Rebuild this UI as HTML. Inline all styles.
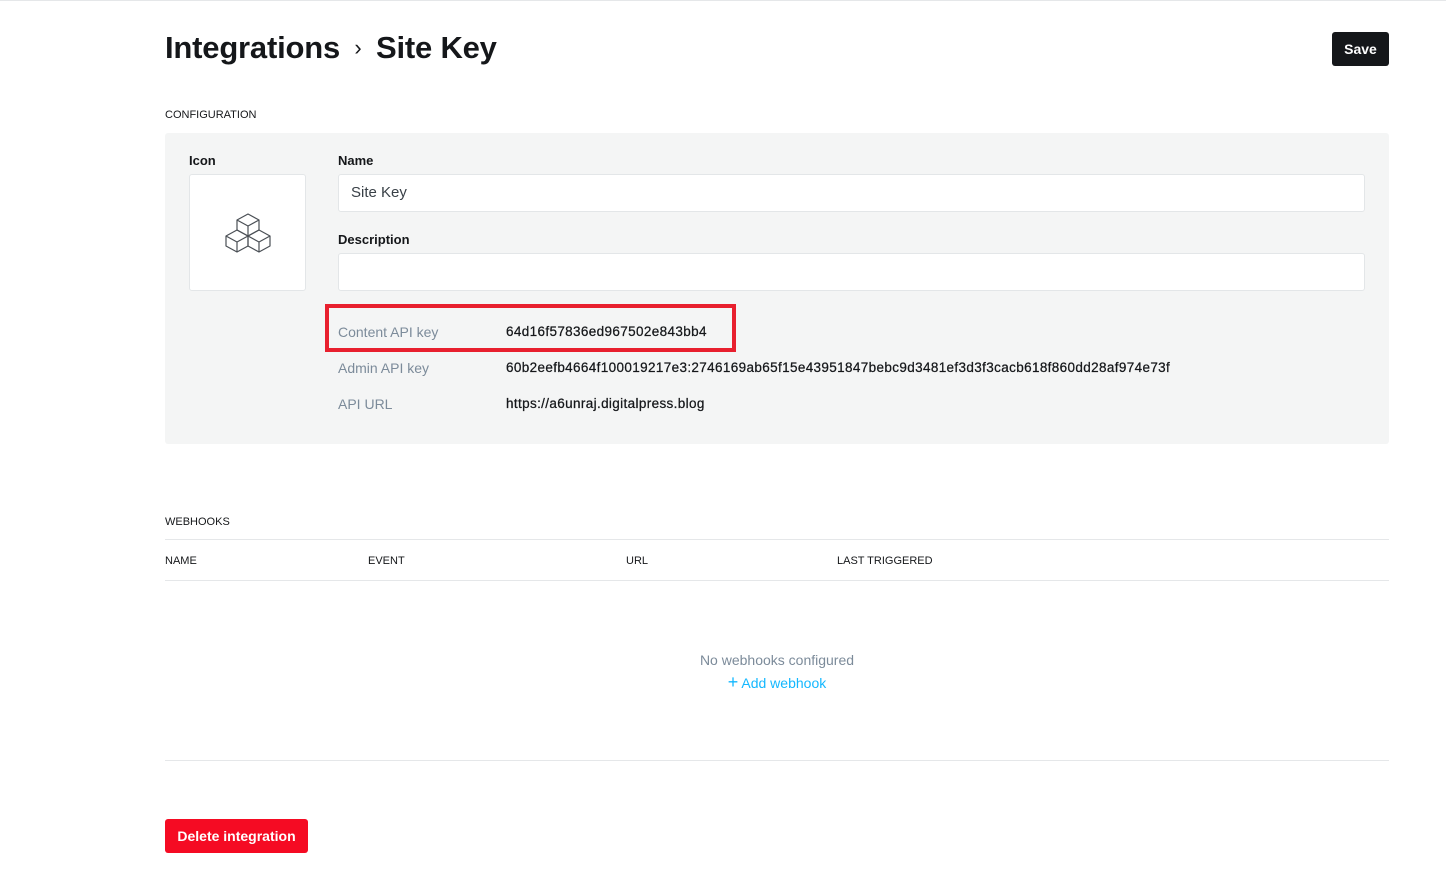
<!DOCTYPE html>
<html><head><meta charset="utf-8"><style>
*{box-sizing:border-box;margin:0;padding:0}
body{width:1446px;height:881px;background:#fff;font-family:"Liberation Sans",sans-serif;color:#15171a;position:relative;overflow:hidden}
.topline{position:absolute;left:0;top:0;width:1446px;height:1px;background:#e5e7e9}
.w{position:absolute;left:0;top:1px;width:1446px;height:880px}
.a{position:absolute;white-space:nowrap}
h1{position:absolute;left:165px;top:29px;font-size:31px;font-weight:700;letter-spacing:-0.2px}
.save{left:1332px;top:31px;width:57px;height:34px;background:#15171a;color:#fff;font-size:14px;font-weight:700;border-radius:3px;display:flex;align-items:center;justify-content:center}
.lab{font-size:11px;color:#15171a}
.panel{left:165px;top:132px;width:1224px;height:311px;background:#f4f5f5;border-radius:3px}
.fl{font-size:13px;font-weight:700;color:#15171a}
.box{background:#fff;border:1px solid #e3e6e8;border-radius:3px}
.k{font-size:14px;color:#7c8b9a}
.v{font-size:13.5px;color:#15171a;letter-spacing:0.36px;-webkit-text-stroke:0.25px #15171a}
.hr{left:165px;width:1224px;height:1px;background:#e5e7e9}
.th{font-size:11px;top:554px}
</style></head><body>
<div class="topline"></div>
<div class="w">
<h1>Integrations <span style="font-weight:400;font-size:22px;position:relative;top:-3px;margin:0 6px">›</span> Site Key</h1>
<div class="a save">Save</div>
<div class="a lab" style="left:165px;top:108px">CONFIGURATION</div>
<div class="a panel"></div>
<div class="a fl" style="left:189px;top:152px">Icon</div>
<div class="a box" style="left:189px;top:173px;width:117px;height:117px">
<svg style="position:absolute;left:35px;top:37px" width="46" height="44" viewBox="0 0 46 44" fill="none" stroke="#4a4f55" stroke-width="1.2" stroke-linejoin="round">
<path d="M23 2l-11 6v10l11 6 11-6V8z M12 8l11 6 11-6 M23 14v10"/>
<path d="M12 18l-11 6v10l11 6 11-6V24z M1 24l11 6 11-6 M12 30v10"/>
<path d="M34 18l-11 6v10l11 6 11-6V24z M23 24l11 6 11-6 M34 30v10"/>
</svg></div>
<div class="a fl" style="left:338px;top:152px">Name</div>
<div class="a box" style="left:338px;top:173px;width:1027px;height:38px;font-size:15px;padding:9px 12px;color:#394047">Site Key</div>
<div class="a fl" style="left:338px;top:231px">Description</div>
<div class="a box" style="left:338px;top:252px;width:1027px;height:38px"></div>
<div class="a" style="left:325px;top:303px;width:411px;height:48px;border:4px solid #e8202e"></div>
<div class="a k" style="left:338px;top:323px">Content API key</div>
<div class="a v" style="left:506px;top:323px">64d16f57836ed967502e843bb4</div>
<div class="a k" style="left:338px;top:359px">Admin API key</div>
<div class="a v" style="left:506px;top:359px">60b2eefb4664f100019217e3:2746169ab65f15e43951847bebc9d3481ef3d3f3cacb618f860dd28af974e73f</div>
<div class="a k" style="left:338px;top:395px">API URL</div>
<div class="a v" style="left:506px;top:395px">https://a6unraj.digitalpress.blog</div>
<div class="a lab" style="left:165px;top:515px">WEBHOOKS</div>
<div class="a hr" style="top:538px"></div>
<div class="a th" style="left:165px">NAME</div>
<div class="a th" style="left:368px">EVENT</div>
<div class="a th" style="left:626px">URL</div>
<div class="a th" style="left:837px">LAST TRIGGERED</div>
<div class="a hr" style="top:579px"></div>
<div class="a" style="left:0;width:1554px;text-align:center;top:651px;font-size:14px;color:#7c8b9a">No webhooks configured</div>
<div class="a" style="left:0;width:1554px;text-align:center;top:674px;font-size:14px;color:#14b8ff"><span style="font-size:18px;line-height:14px">+</span> Add webhook</div>
<div class="a hr" style="top:759px"></div>
<div class="a" style="left:165px;top:818px;width:143px;height:34px;background:#f50b23;color:#fff;font-size:14px;font-weight:700;border-radius:3px;display:flex;align-items:center;justify-content:center">Delete integration</div>
</div>
</body></html>
